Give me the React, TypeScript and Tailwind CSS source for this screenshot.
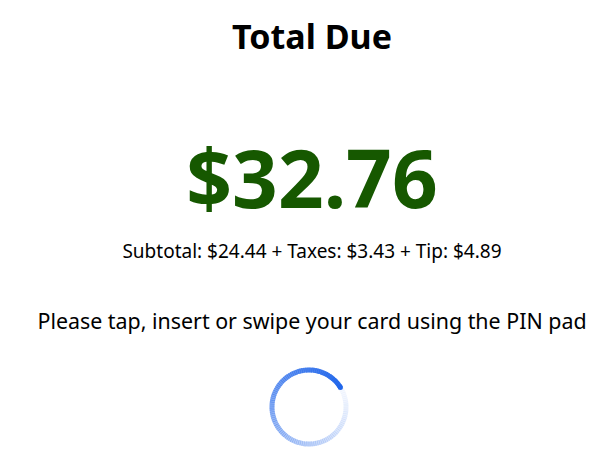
import React from "react";

function Spinner() {
  const n = 120;
  const start = 58;
  const cx = 40, cy = 40, r = 37;
  const segs = [];
  for (let i = 0; i < n; i++) {
    const a0 = ((start + (360 * i) / n - 90) * Math.PI) / 180;
    const a1 = ((start + (360 * (i + 1.3)) / n - 90) * Math.PI) / 180;
    const x0 = cx + r * Math.cos(a0), y0 = cy + r * Math.sin(a0);
    const x1 = cx + r * Math.cos(a1), y1 = cy + r * Math.sin(a1);
    const t = i / (n - 1);
    segs.push(
      <path
        key={i}
        d={`M${x0} ${y0} A${r} ${r} 0 0 1 ${x1} ${y1}`}
        stroke="#2166ea"
        strokeWidth={5}
        fill="none"
        opacity={0.04 + 0.96 * Math.pow(t, 1.3)}
      />
    );
  }
  const ah = ((start - 90) * Math.PI) / 180;
  return (
    <svg width="80" height="80" viewBox="0 0 80 80">
      {segs}
      <circle cx={cx + r * Math.cos(ah)} cy={cy + r * Math.sin(ah)} r={2.5} fill="#2166ea" />
    </svg>
  );
}

export default function App() {
  return (
    <div
      className="w-[612px] h-[455px] bg-white flex flex-col items-center pl-[12px] text-black overflow-hidden"
      style={{ fontFamily: '"Noto Sans", "Open Sans", sans-serif' }}
    >
      <h1 className="mt-[13px] text-[34px] leading-[46px] font-bold">Total Due</h1>
      <div className="mt-[78px] text-[80px] leading-[80px] font-bold text-[#165800]">$32.76</div>
      <div className="mt-[21px] text-[19px] leading-[26px]">
        Subtotal: $24.44 + Taxes: $3.43 + Tip: $4.89
      </div>
      <div className="mt-[42px] text-[21.4px] leading-[30px]">
        Please tap, insert or swipe your card using the PIN pad
      </div>
      <div className="mt-[31px] mr-[6px]">
        <Spinner />
      </div>
    </div>
  );
}
